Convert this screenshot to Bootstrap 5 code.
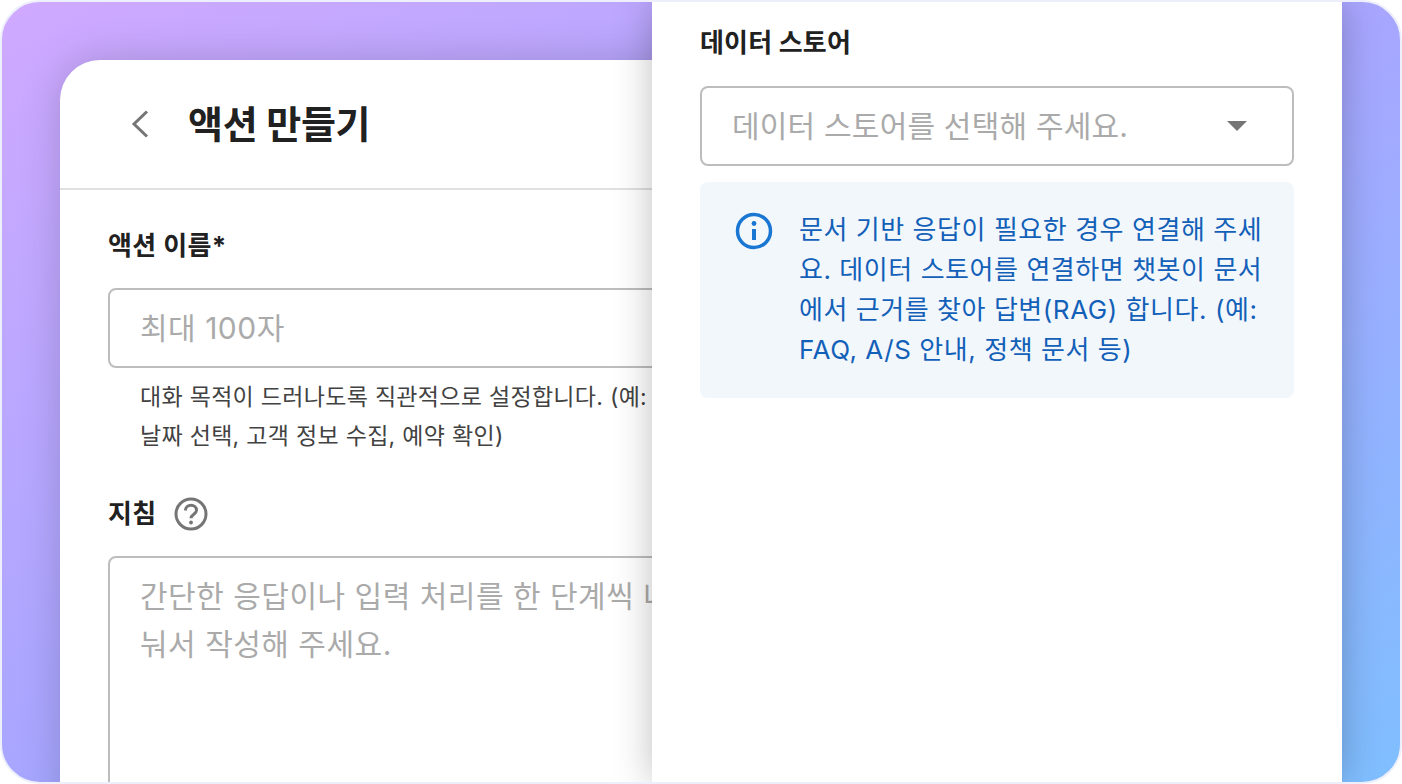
<!DOCTYPE html>
<html lang="ko">
<head>
  <meta charset="UTF-8">
  <title>액션 만들기</title>
  <link href="https://cdn.jsdelivr.net/npm/bootstrap@5.3.0/dist/css/bootstrap.min.css" rel="stylesheet">
  <style>
    html, body { height: 100%; overflow: hidden; }
    body { background: #fff; font-family: Inter, "Noto Sans CJK KR", sans-serif; color: #212121; }
    .app-frame {
      height: 784px; border: 2px solid #edeffc; border-radius: 40px; overflow: hidden;
      background: linear-gradient(to bottom right, #cfa9ff 0%, #a8a6ff 50%, #7fbfff 100%);
    }
    .left-side { width: 650px; padding: 58px 0 0 58px; overflow: hidden; flex-shrink: 0; }
    .left-card {
      width: 720px; height: 900px; background: #fff; border-radius: 40px 0 0 0;
      box-shadow: 0 0 40px rgba(0, 0, 0, .18);
    }
    .left-head { height: 130px; padding-left: 70px; gap: 38px; border-bottom: 2px solid #e0e0e0; }
    .left-title { font-size: 38px; font-weight: 700; letter-spacing: -.25px; line-height: 1; margin: 0; }
    .left-body { padding: 38px 0 0 48px; }
    .field-label { font-size: 26px; font-weight: 700; line-height: 36px; letter-spacing: .4px; }
    .big-field.form-control {
      width: 604px; border: 2px solid #bdbdbd; border-radius: 8px; box-shadow: none;
      font-size: 30px; letter-spacing: .5px; font-family: inherit; color: #212121;
    }
    .big-field.form-control::placeholder { color: #aaa; opacity: 1; }
    .name-input.form-control { height: 80px; padding: 0 30px; margin-top: 24px; }
    .help-line { font-size: 23px; line-height: 39px; padding-left: 32px; margin: 10px 0 0; width: 560px; color: #424242; letter-spacing: .3px; }
    .guide-head { margin-top: 40px; gap: 17px; height: 36px; }
    .guide-area.form-control { height: 260px; margin-top: 24px; padding: 14px 30px; line-height: 48px; resize: none; }
    .right-panel {
      width: 690px; background: #fff; padding: 23px 48px 0; flex-shrink: 0; position: relative;
      box-shadow: 0 0 36px rgba(0, 0, 0, .25);
    }
    .store-label { font-size: 26px; font-weight: 700; line-height: 36px; letter-spacing: .2px; }
    .store-select {
      height: 80px; margin-top: 25px; padding: 0 45px 0 30px; border: 2px solid #bdbdbd; border-radius: 8px;
      font-size: 30px; letter-spacing: .2px; color: #aaa;
    }
    .caret-down { width: 0; height: 0; border-left: 10px solid transparent; border-right: 10px solid transparent; border-top: 10px solid #757575; }
    .info-box {
      margin-top: 16px; height: 216px; padding: 28px 30px 0 35px; gap: 26px; background: #f2f7fc; border-radius: 8px;
      color: #1260b8; font-size: 26px; letter-spacing: .55px; line-height: 40px; word-break: break-all;
    }
    .info-box svg { flex-shrink: 0; margin-top: 2px; }
  </style>
</head>
<body>
  <div class="app-frame d-flex">
    <!-- Left: action form, cut off by the panel -->
    <div class="left-side">
      <div class="left-card">
        <div class="left-head d-flex align-items-center">
          <svg width="20" height="28" viewBox="0 0 20 28" fill="none" stroke="#757575" stroke-width="3"><path d="M17 1.500 4 14l13 12.500"/></svg>
          <h1 class="left-title">액션 만들기</h1>
        </div>
        <div class="left-body">
          <div class="field-label">액션 이름*</div>
          <input class="form-control big-field name-input" type="text" placeholder="최대 100자">
          <p class="help-line">대화 목적이 드러나도록 직관적으로 설정합니다. (예: 날짜 선택, 고객 정보 수집, 예약 확인)</p>
          <div class="guide-head d-flex align-items-center">
            <div class="field-label">지침</div>
            <svg width="34" height="34" viewBox="0 0 34 34" fill="none" stroke="#757575" stroke-width="3">
              <circle cx="17" cy="17" r="15"/>
              <path d="M11.500 13.500c0-3.200 2.500-5.200 5.500-5.200s5.500 2 5.500 5c0 3.800-5.500 4-5.500 8"/>
              <circle cx="17" cy="25.500" r="1.900" fill="#757575" stroke="none"/>
            </svg>
          </div>
          <textarea class="form-control big-field guide-area" placeholder="간단한 응답이나 입력 처리를 한 단계씩 나눠서 작성해 주세요."></textarea>
        </div>
      </div>
    </div>
    <!-- Right: data store panel -->
    <div class="right-panel">
      <div class="store-label">데이터 스토어</div>
      <div class="store-select d-flex align-items-center justify-content-between">
        <span>데이터 스토어를 선택해 주세요.</span>
        <span class="caret-down"></span>
      </div>
      <div class="info-box d-flex">
        <svg width="38" height="38" viewBox="0 0 38 38" fill="none" stroke="#1976d2" stroke-width="3.500">
          <circle cx="19" cy="19" r="16.500"/>
          <path d="M19 17v11" stroke-width="4"/>
          <circle cx="19" cy="11.500" r="2.400" fill="#1976d2" stroke="none"/>
        </svg>
        <div>문서 기반 응답이 필요한 경우 연결해 주세요. 데이터 스토어를 연결하면 챗봇이 문서에서 근거를 찾아 답변(RAG) 합니다. (예: FAQ, A/S 안내, 정책 문서 등)</div>
      </div>
    </div>
  </div>
  <script src="https://cdn.jsdelivr.net/npm/bootstrap@5.3.0/dist/js/bootstrap.bundle.min.js"></script>
</body>
</html>
